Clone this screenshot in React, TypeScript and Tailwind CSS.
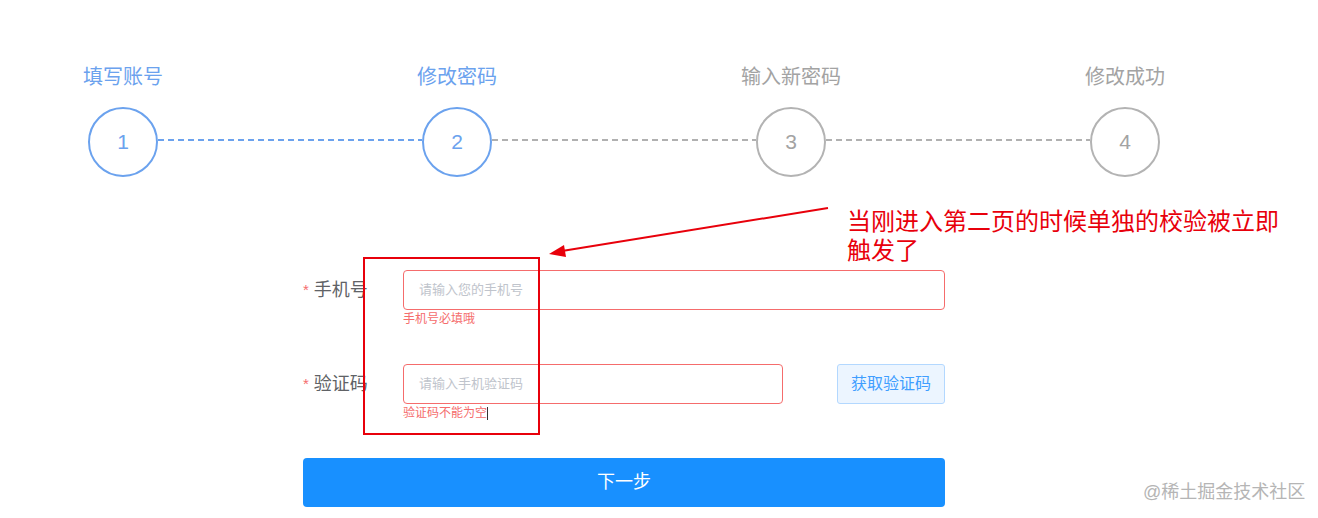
import React from 'react';

const FONT = '"Liberation Sans", "Noto Sans CJK SC", sans-serif';

const steps = [
  { label: '填写账号', n: 1, active: true },
  { label: '修改密码', n: 2, active: true },
  { label: '输入新密码', n: 3, active: false },
  { label: '修改成功', n: 4, active: false },
];

const Step = ({ label, n, active }: { label: string; n: number; active: boolean }) => (
  <div className="flex flex-col items-center w-[70px] shrink-0">
    <div
      className={`whitespace-nowrap text-[20px] leading-[28px] ${active ? 'text-[#6ba2ee]' : 'text-[#a3a3a3]'}`}
    >
      {label}
    </div>
    <div
      className={`mt-[16px] w-[70px] h-[70px] rounded-full border-2 flex items-center justify-center text-[21px] ${
        active ? 'border-[#6ba2ee] text-[#6ba2ee]' : 'border-[#b3b3b3] text-[#a3a3a3]'
      }`}
    >
      {n}
    </div>
  </div>
);

const Connector = ({ active }: { active: boolean }) => (
  <div
    className={`w-[264px] h-[2px] mb-[36px] self-end shrink-0 ${
      active
        ? 'bg-[repeating-linear-gradient(90deg,#6ba2ee_0_6px,transparent_6px_10px)]'
        : 'bg-[repeating-linear-gradient(90deg,#b0b0b0_0_6px,transparent_6px_10px)]'
    }`}
  />
);

export default function App() {
  return (
    <div className="relative w-[1318px] h-[518px] bg-white overflow-hidden" style={{ fontFamily: FONT }}>
      {/* Steps */}
      <div className="flex items-end pt-[63px] pl-[88px]">
        {steps.map((s, i) => (
          <React.Fragment key={s.n}>
            <Step {...s} />
            {i < steps.length - 1 && <Connector active={i === 0} />}
          </React.Fragment>
        ))}
      </div>

      {/* Form */}
      <div className="ml-[303px] mt-[93px] w-[642px]">
        <div className="flex items-start mb-[54px]">
          <div className="w-[100px] h-[40px] flex items-center text-[18px] text-[#606266]">
            <span className="text-[#f56c6c] mr-[5px] text-[15px]">*</span>手机号
          </div>
          <div className="relative flex-1">
            <div className="h-[40px] border border-[#f56c6c] rounded-[4px] flex items-center pl-[15px] text-[13px] text-[#c0c4cc]">
              请输入您的手机号
            </div>
            <div className="absolute left-0 top-[41px] text-[12px] leading-[16px] text-[#f56c6c]">手机号必填哦</div>
          </div>
        </div>

        <div className="flex items-start mb-[54px]">
          <div className="w-[100px] h-[40px] flex items-center text-[18px] text-[#606266]">
            <span className="text-[#f56c6c] mr-[5px] text-[15px]">*</span>验证码
          </div>
          <div className="relative flex-1 flex">
            <div className="relative w-[380px]">
              <div className="h-[40px] border border-[#f56c6c] rounded-[4px] flex items-center pl-[15px] text-[13px] text-[#c0c4cc]">
                请输入手机验证码
              </div>
              <div className="absolute left-0 top-[41px] text-[12px] leading-[16px] text-[#f56c6c] flex items-center">
                验证码不能为空<span className="inline-block w-px h-[13px] bg-[#333]" />
              </div>
            </div>
            <button className="ml-auto w-[108px] h-[40px] rounded-[3px] border border-[#b3d8ff] bg-[#ecf5ff] text-[#409eff] text-[16px]">
              获取验证码
            </button>
          </div>
        </div>

        <button className="w-full h-[49px] rounded-[4px] bg-[#1890ff] text-white text-[18px]">下一步</button>
      </div>

      {/* Annotation */}
      <div className="absolute left-[363px] top-[257px] w-[177px] h-[178px] border-2 border-[#e8000b]" />
      <svg className="absolute left-0 top-0" width="1318" height="518">
        <line x1="828" y1="208" x2="562" y2="251" stroke="#e8000b" strokeWidth="2" />
        <polygon points="549,254 564,245 566,257" fill="#e8000b" />
      </svg>
      <div className="absolute left-[847px] top-[207px] text-[24px] leading-[29px] text-[#e8000b] w-[440px]">
        当刚进入第二页的时候单独的校验被立即
        <br />
        触发了
      </div>

      {/* Watermark */}
      <div className="absolute left-[1143px] top-[479px] text-[18px] leading-[26px] text-[#b5b5b5]">@稀土掘金技术社区</div>
    </div>
  );
}
